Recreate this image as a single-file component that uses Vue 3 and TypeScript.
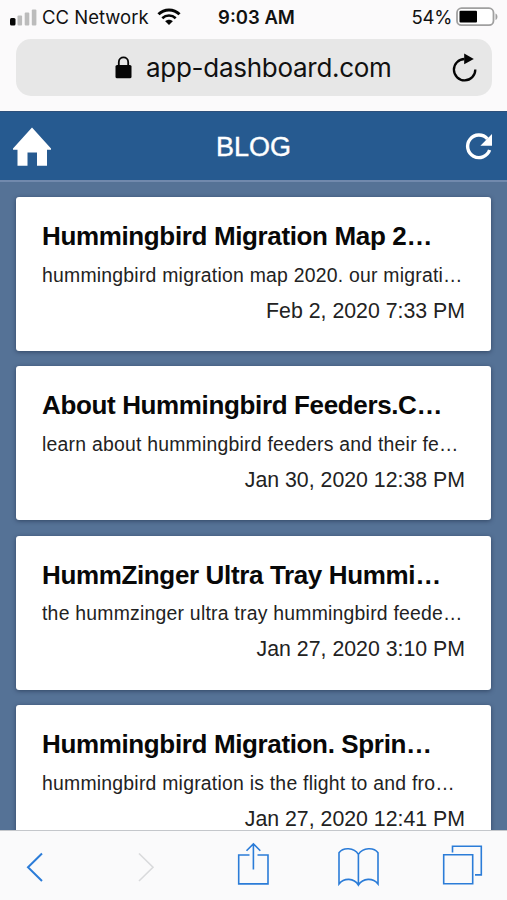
<script setup lang="ts">
interface Post {
  title: string
  summary: string
  date: string
}

const posts: Post[] = [
  { title: 'Hummingbird Migration Map 2…', summary: 'hummingbird migration map 2020. our migrati…', date: 'Feb 2, 2020 7:33 PM' },
  { title: 'About Hummingbird Feeders.C…', summary: 'learn about hummingbird feeders and their fe…', date: 'Jan 30, 2020 12:38 PM' },
  { title: 'HummZinger Ultra Tray Hummi…', summary: 'the hummzinger ultra tray hummingbird feede…', date: 'Jan 27, 2020 3:10 PM' },
  { title: 'Hummingbird Migration. Sprin…', summary: 'hummingbird migration is the flight to and fro…', date: 'Jan 27, 2020 12:41 PM' },
]
</script>

<template>
  <div class="phone">
    <div class="status">
      <div class="carrier">
        <svg class="signal" width="27" height="17" viewBox="0 0 27 17">
          <rect x="0" y="9" width="5.5" height="7.5" rx="1.5" fill="#050505" />
          <rect x="7.5" y="6.5" width="4.6" height="10" rx="1" fill="#bcbcbc" />
          <rect x="14.7" y="3.5" width="4.6" height="13" rx="1" fill="#bcbcbc" />
          <rect x="21.8" y="0.5" width="4.6" height="16" rx="1" fill="#bcbcbc" />
        </svg>
        <span class="network">CC Network</span>
        <svg class="wifi" width="24" height="18" viewBox="0 0 24 18" fill="none" stroke="#050505">
          <path d="M1.5 6.3C7.3.4 16.7.4 22.5 6.3" stroke-width="3" />
          <path d="M5.3 10.2c3.8-3.7 9.6-3.7 13.4 0" stroke-width="2.6" />
          <path d="M8.2 13.2c2.2-2 5.4-2 7.6 0L12 17z" fill="#050505" stroke="none" />
        </svg>
      </div>
      <span class="clock">9:03 AM</span>
      <div class="power">
        <span class="percent">54%</span>
        <svg class="battery" width="43" height="20" viewBox="0 0 43 20">
          <rect x="1" y="1.2" width="36.5" height="17" rx="4.5" fill="#fff" stroke="#a0a0a0" stroke-width="1.8" />
          <rect x="3.5" y="3.8" width="17.5" height="11.8" rx="1" fill="#000" />
          <path d="M39.5 6.5c2.6.8 2.6 5.7 0 6.5z" fill="#a0a0a0" />
        </svg>
      </div>
    </div>

    <div class="address">
      <svg class="lock" width="17" height="23" viewBox="0 0 17 23">
        <path d="M3.8 11V6.2C3.8-.2 13.2-.2 13.2 6.2V11" fill="none" stroke="#050505" stroke-width="1.8" />
        <rect x="0.5" y="9" width="16" height="13.3" rx="1.6" fill="#050505" />
      </svg>
      <span class="domain">app-dashboard.com</span>
      <svg class="reload" width="26" height="29" viewBox="0 0 26 29">
        <path d="M12.5 6A10.7 10.7 0 1 0 23.3 16.5" fill="none" stroke="#050505" stroke-width="2.3" />
        <path d="M12.2.4v10.8L21.8 6z" fill="#050505" />
      </svg>
    </div>

    <header class="header">
      <svg class="home" width="38" height="40" viewBox="0 0 38 40">
        <path d="M19 .5 38 21.5v1.2h-4v16H24V25.5H14.5v13.2H4.5v-16H0v-1.2z" fill="#fff" />
      </svg>
      <h1 class="heading">BLOG</h1>
      <svg class="refresh" width="28" height="28" viewBox="0 0 28 28">
        <path d="M22.4 5.8A11.3 11.3 0 1 0 24.6 17" fill="none" stroke="#fff" stroke-width="3.4" />
        <path d="M27 1V12.7H15.4z" fill="#fff" />
      </svg>
    </header>

    <main class="feed">
      <article v-for="post in posts" :key="post.title" class="card">
        <h2 class="title">{{ post.title }}</h2>
        <p class="summary">{{ post.summary }}</p>
        <time class="date">{{ post.date }}</time>
      </article>
    </main>

    <nav class="toolbar">
      <svg width="507" height="69" viewBox="0 0 507 69" fill="none" stroke="#2b7cd8" stroke-width="1.6">
        <path d="M42 22.5 28 36.2 42 50" stroke-width="2" />
        <path d="M139 22.5 153 36.2 139 50" stroke="#d9dadc" stroke-width="1.6" />
        <path d="M249.5 24H238.7V52.9H268V24H257.5M253.4 38.5V13M246.5 19.7 253.4 12.9 260.3 19.7" />
        <path d="M358.4 23.4C354 16.2 343 16.2 339 21.7V52.9C344 46.7 354 46.7 358.4 54.1C363 46.7 373 46.7 378 52.9V21.7C374 16.2 363 16.2 358.4 23.4zV54.1" />
        <path d="M443.7 23.8H472.7V52.8H443.7zM452.5 21.4V15.3H481.3V43.9H475" />
      </svg>
    </nav>
  </div>
</template>

<style>
body {
  margin: 0;
}
</style>

<style scoped>
.phone {
  width: 507px;
  height: 900px;
  display: flex;
  flex-direction: column;
  overflow: hidden;
  background: #fbfafb;
  color: #111;
  font-family: "Liberation Sans", Arial, sans-serif;
}

.status {
  flex: none;
  height: 34px;
  display: grid;
  grid-template-columns: 1fr auto 1fr;
  align-items: center;
  padding: 0 8px 0 10px;
  box-sizing: border-box;
  font-family: Inter, sans-serif;
  font-size: 18.5px;
  white-space: nowrap;
}

.carrier,
.power {
  display: flex;
  align-items: center;
}

.power {
  justify-content: flex-end;
  gap: 4px;
}

.percent {
  letter-spacing: -0.3px;
}

.network {
  margin: 0 8px 0 5px;
}

.clock {
  margin-left: 4px;
  font-weight: 600;
}

.address {
  flex: none;
  height: 57px;
  margin: 5px 15px 15px 16px;
  display: flex;
  align-items: center;
  box-sizing: border-box;
  padding: 0 14px 0 99px;
  border-radius: 15px;
  background: #e7e7e7;
}

.domain {
  margin-left: 14px;
  flex: 1;
  font-family: Inter, sans-serif;
  font-size: 26px;
  letter-spacing: -0.28px;
  white-space: nowrap;
}

.header {
  flex: none;
  height: 71px;
  display: flex;
  align-items: center;
  justify-content: space-between;
  box-sizing: border-box;
  padding: 0 14px 0 13px;
  border-top: 1px solid #2d507b;
  border-bottom: 2px solid #7189ad;
  background: #265a90;
  color: #fff;
}

.home {
  margin-top: 1px;
}

.refresh {
  margin-top: 2px;
}

.heading {
  margin: 3px 9px 0 0;
  font-size: 27px;
  font-weight: 400;
  -webkit-text-stroke: 0.4px #fff;
}

.feed {
  flex: 1;
  min-height: 0;
  display: flex;
  flex-direction: column;
  gap: 15.4px;
  padding: 15px 16px 0;
  overflow: hidden;
  background: #557296;
}

.card {
  flex: none;
  height: 154px;
  box-sizing: border-box;
  padding: 24px 26px 0;
  border-radius: 3px;
  background: #fff;
  box-shadow: 0 1px 4px rgba(20, 35, 60, 0.55);
  display: flex;
  flex-direction: column;
  white-space: nowrap;
}

.title {
  margin: 0;
  font-size: 26px;
  line-height: 30px;
  font-weight: 700;
  letter-spacing: -0.36px;
  color: #080808;
}

.summary {
  margin: 11.5px 0 0;
  font-size: 19.4px;
  line-height: 24px;
  letter-spacing: 0.23px;
  color: #222;
}

.date {
  align-self: flex-end;
  margin-top: 12px;
  font-size: 21.3px;
  line-height: 24px;
  color: #222;
}

.toolbar {
  flex: none;
  height: 70px;
  box-sizing: border-box;
  border-top: 1px solid #c4c7cb;
  background: #fafafb;
}

.toolbar svg {
  display: block;
}
</style>
